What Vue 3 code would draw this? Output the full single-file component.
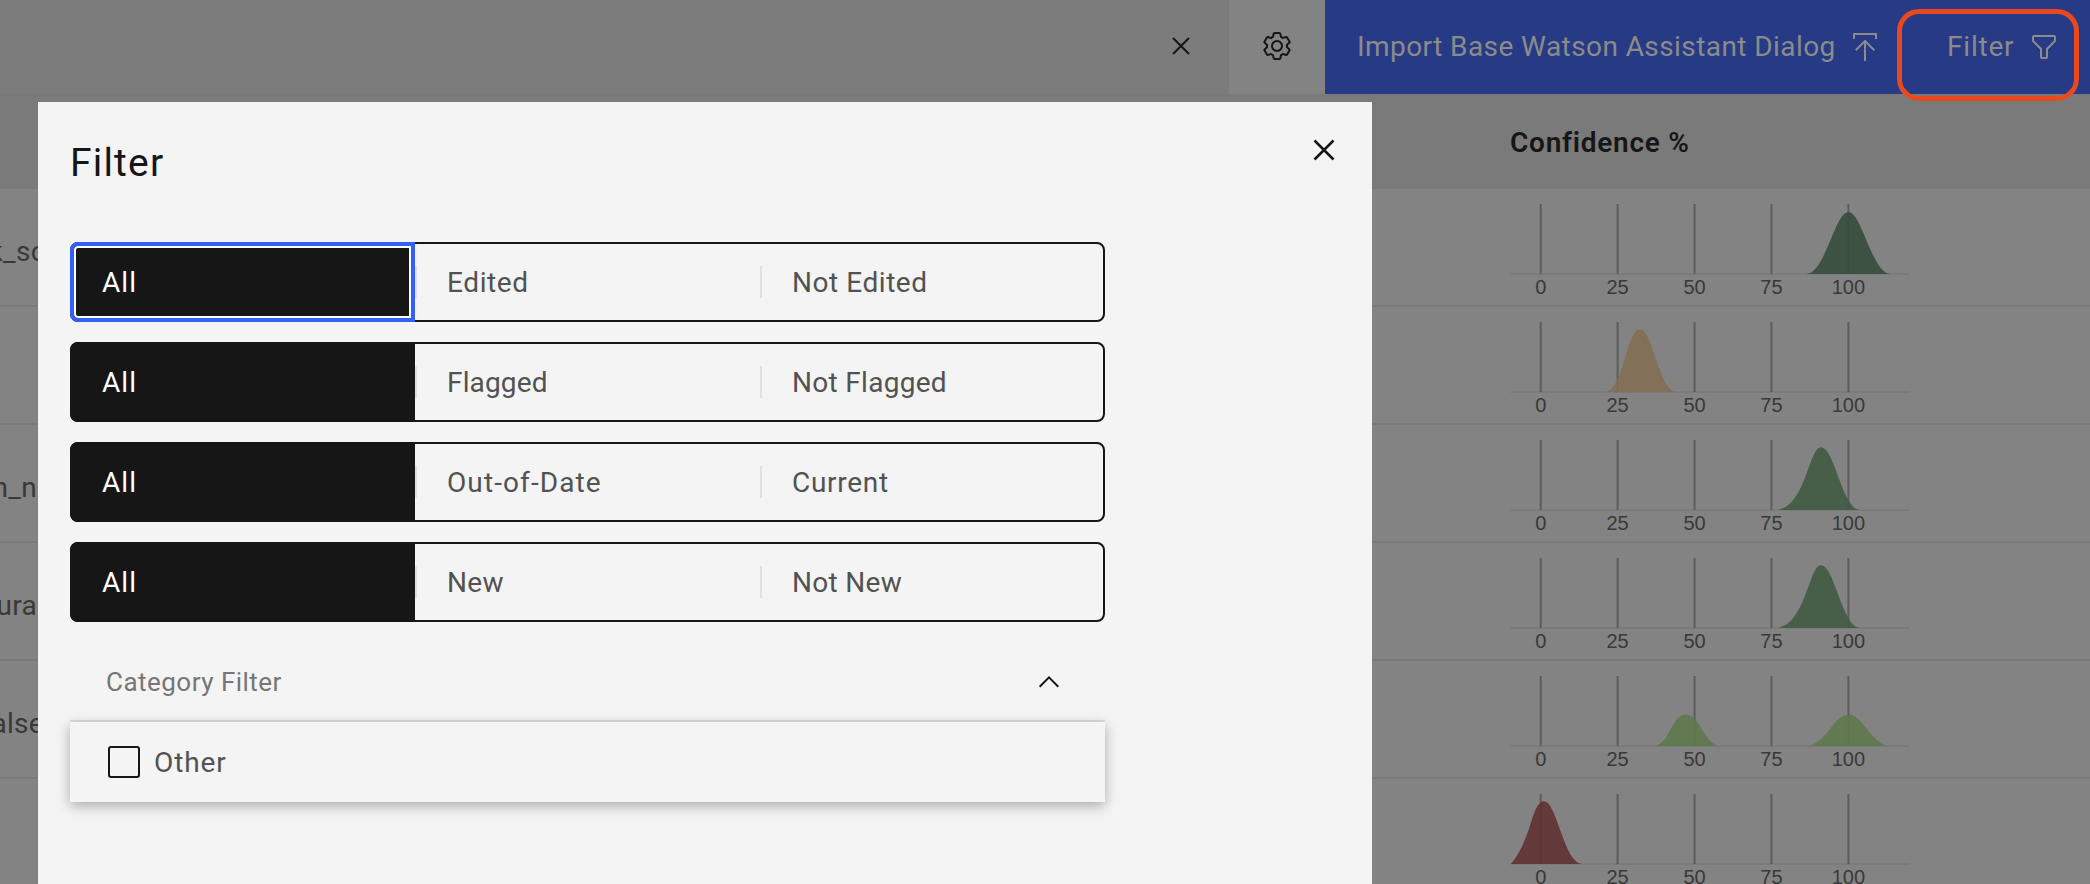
<script setup>
const filters = [
  [{ t: 'All', ls: 1.1 }, { t: 'Edited', ls: 0.6 }, { t: 'Not Edited', ls: 0.55 }],
  [{ t: 'All', ls: 1.1 }, { t: 'Flagged', ls: 0.15 }, { t: 'Not Flagged', ls: 0.3 }],
  [{ t: 'All', ls: 1.1 }, { t: 'Out-of-Date', ls: 1.1 }, { t: 'Current', ls: 0.7 }],
  [{ t: 'All', ls: 1.1 }, { t: 'New', ls: 0.4 }, { t: 'Not New', ls: 0.3 }],
]

const ticks = [0, 25, 50, 75, 100].map((v) => ({ v, x: 30.7 + v * 3.077 }))

const rows = [
  { label: 'k_so', end: 47, color: '#334a38', d: 'M296,85C315,85 325,23 338.4,23C352,23 362,85 380.7,85Z' },
  { label: '', end: 36, color: '#836e53', d: 'M95,85C113,85 117,22.3 129.7,22.3C143,22.3 149,85 166.7,85Z' },
  { label: 'n_n', end: 37, color: '#3e5a3f', d: 'M265,85C295,85 299,22.3 310.7,22.3C325,22.3 332,85 350.7,85Z' },
  { label: 'ura', end: 37, color: '#3e5a3f', d: 'M265,85C295,85 299,22.3 310.7,22.3C325,22.3 332,85 350.7,85Z' },
  {
    label: 'alse', end: 44, color: '#5d784b',
    d: 'M142.7,85C160,85 161,53.5 175.7,53.5C190,53.5 195,85 210.7,85Z M296,85C315,85 324,53.5 338.4,53.5C353,53.5 362,85 380.7,85Z',
  },
  { label: '', end: 36, color: '#5f2d2f', d: 'M0.7,85C8,77 14,64 19,50C23,37 27,22.3 34,22.3C47,22.3 54,85 72.7,85Z' },
]
</script>

<template>
  <div class="page">
    <header class="toolbar">
      <div class="search">
        <svg class="i32" viewBox="0 0 32 32"><path d="M8 8 24 24M24 8 8 24" fill="none" stroke="#161616" stroke-width="2" /></svg>
      </div>
      <div class="settings">
        <svg class="i32" viewBox="0 0 32 32" fill="#161616">
          <path d="M27,16.76c0-.25,0-.5,0-.76s0-.51,0-.77l1.92-1.68A2,2,0,0,0,29.3,11L26.94,7a2,2,0,0,0-1.73-1,2,2,0,0,0-.64.1l-2.43.82a11.35,11.35,0,0,0-1.31-.75l-.51-2.52a2,2,0,0,0-2-1.61H13.64a2,2,0,0,0-2,1.61l-.51,2.52a11.48,11.48,0,0,0-1.32.75L7.43,6.06A2,2,0,0,0,6.79,6,2,2,0,0,0,5.06,7L2.7,11a2,2,0,0,0,.41,2.51L5,15.24c0,.25,0,.5,0,.76s0,.51,0,.77L3.11,18.45A2,2,0,0,0,2.7,21L5.06,25a2,2,0,0,0,1.73,1,2,2,0,0,0,.64-.1l2.43-.82a11.35,11.35,0,0,0,1.31.75l.51,2.52a2,2,0,0,0,2,1.61h4.72a2,2,0,0,0,2-1.61l.51-2.52a11.48,11.48,0,0,0,1.32-.75l2.42.82a2,2,0,0,0,.64.1,2,2,0,0,0,1.73-1L29.3,21a2,2,0,0,0-.41-2.51ZM25.21,24l-3.43-1.16a8.86,8.86,0,0,1-2.71,1.57L18.36,28H13.64l-.71-3.55a9.36,9.36,0,0,1-2.7-1.57L6.79,24,4.43,20l2.72-2.4a8.9,8.9,0,0,1,0-3.13L4.43,12,6.79,8l3.43,1.16a8.86,8.86,0,0,1,2.71-1.57L13.64,4h4.72l.71,3.55a9.36,9.36,0,0,1,2.7,1.57L25.21,8,27.57,12l-2.72,2.4a8.9,8.9,0,0,1,0,3.13L27.57,20Z" />
          <path d="M16,22a6,6,0,1,1,6-6A5.94,5.94,0,0,1,16,22Zm0-10a3.91,3.91,0,0,0-4,4,3.91,3.91,0,0,0,4,4,3.91,3.91,0,0,0,4-4A3.91,3.91,0,0,0,16,12Z" />
        </svg>
      </div>
      <button class="btn import">
        <span class="import-label">Import Base Watson Assistant Dialog</span>
        <svg class="i32" viewBox="0 0 32 32"><path d="M5 8V3H27V8M16 30V10M6.7 19.3 16 10 25.3 19.3" fill="none" stroke="#8b8b8b" stroke-width="2" stroke-linejoin="round" /></svg>
      </button>
      <button class="btn filter">
        <span class="filter-label">Filter</span>
        <svg class="i32" viewBox="0 0 32 32" fill="#8b8b8b"><path d="M18,28H14a2,2,0,0,1-2-2V18.41L4.59,11A2,2,0,0,1,4,9.59V6A2,2,0,0,1,6,4H26a2,2,0,0,1,2,2V9.59A2,2,0,0,1,27.41,11L20,18.41V26A2,2,0,0,1,18,28ZM6,6V9.59l8,8V26h4V17.59l8-8V6Z" /></svg>
        <i class="highlight"></i>
      </button>
    </header>

    <div class="thead"><span>Confidence %</span></div>
    <div v-for="(r, i) in rows" :key="i" class="row">
      <div class="cell" :style="{ width: r.end + 'px' }"><span>{{ r.label }}</span></div>
      <svg class="chart" width="420" height="116" viewBox="0 0 420 116">
        <rect x="0.5" y="84.3" width="399" height="1.6" fill="#797979" />
        <rect v-for="t in ticks" :key="t.v" :x="t.x - 1" y="15" width="2" height="70" fill="#5c5c5c" />
        <path :d="r.d" :fill="r.color" fill-opacity="0.86" />
        <text v-for="t in ticks" :key="'l' + t.v" :x="t.x" y="105" text-anchor="middle">{{ t.v }}</text>
      </svg>
    </div>

    <section class="modal">
      <div class="modal-head">
        <h2>Filter</h2>
        <svg class="close" viewBox="0 0 32 32"><path d="M8.4 8.4 23.6 23.6M23.6 8.4 8.4 23.6" fill="none" stroke="#161616" stroke-width="2" /></svg>
      </div>
      <div class="switches">
        <div v-for="(f, i) in filters" :key="i" class="switcher">
          <div v-for="(o, j) in f" :key="j" class="opt" :class="{ on: j === 0, focus: i === 0 && j === 0 }">
            <span :style="{ letterSpacing: o.ls + 'px' }">{{ o.t }}</span>
          </div>
        </div>
      </div>
      <div class="dropdown">
        <span>Category Filter</span>
        <svg class="i32" viewBox="0 0 32 32"><path d="M6.7 20.7 16 11.4 25.3 20.7" fill="none" stroke="#161616" stroke-width="2" /></svg>
      </div>
      <div class="menu">
        <i class="box"></i>
        <span>Other</span>
      </div>
    </section>
  </div>
</template>

<style>
body { margin: 0; overflow: hidden; }
</style>

<style scoped>
* { box-sizing: border-box; }
.page {
  position: relative;
  width: 2090px;
  height: 884px;
  overflow: hidden;
  background: #838383;
  font-family: Roboto, "Liberation Sans", sans-serif;
  font-size: 28px;
  color: #393939;
}
svg { display: block; flex: none; }
.i32 { width: 32px; height: 32px; }
.toolbar { display: flex; height: 94px; }
.search { width: 1229px; background: #7c7c7c; display: flex; align-items: center; justify-content: flex-end; padding-right: 32px; padding-bottom: 2px; }
.settings { width: 96px; display: flex; align-items: center; justify-content: center; padding-bottom: 2px; }
.btn {
  border: 0;
  margin: 0;
  height: 94px;
  background: #273a85;
  color: #8b8b8b;
  font: 400 28px Roboto, sans-serif;
  display: flex;
  align-items: center;
  justify-content: space-between;
  padding-bottom: 2px;
  white-space: nowrap;
}
.import { width: 590px; padding-left: 32px; padding-right: 34px; }
.import-label { letter-spacing: 0.42px; }
.filter { width: 175px; position: relative; padding-left: 32px; padding-right: 30px; }
.filter-label { letter-spacing: 0.8px; }
.highlight { position: absolute; left: -18px; top: 9px; width: 182px; height: 92px; border: 5px solid #e9491f; border-radius: 22px; z-index: 1; }
.thead { height: 95px; background: #7a7a7a; padding-top: 2px; padding-left: 1510px; display: flex; align-items: center; font-weight: 600; color: #161616; }
.thead span { letter-spacing: 0.75px; white-space: nowrap; }
.row { height: 118px; border-bottom: 2px solid #7a7a7a; display: flex; justify-content: space-between; }
.cell { display: flex; justify-content: flex-end; align-items: center; padding-top: 9px; white-space: nowrap; }
.cell span { flex: none; letter-spacing: 0.3px; }
.chart { margin-right: 160px; }
.chart text { font: 20px "Liberation Sans", Arial, sans-serif; fill: #393939; }
.modal { position: absolute; left: 38px; top: 102px; width: 1334px; height: 782px; background: #f4f4f4; padding: 0 32px; }
.modal-head { height: 140px; display: flex; justify-content: space-between; align-items: flex-start; }
h2 { margin: 36px 0 0; font-weight: 400; font-size: 39px; line-height: 50px; letter-spacing: 1.2px; color: #161616; }
.close { width: 40px; height: 40px; margin: 28px -4px 0 0; }
.switches { display: flex; flex-direction: column; gap: 20px; width: 1035px; }
.switcher { height: 80px; display: flex; border: 2px solid #161616; border-radius: 8px; }
.opt { position: relative; width: 345px; padding-left: 32px; display: flex; align-items: center; color: #525252; white-space: nowrap; flex: none; }
.opt:last-child { width: 343px; }
.opt:not(.on)::before { content: ""; position: absolute; left: 0; top: 22px; width: 2px; height: 32px; background: #e0e0e0; }
.opt.on { margin: -2px 0 -2px -2px; background: #161616; color: #fff; border-radius: 8px 0 0 8px; }
.opt.focus { border: 4px solid #345ffb; box-shadow: inset 0 0 0 2px #fff; padding-left: 28px; }
.dropdown { width: 1035px; height: 100px; padding: 22px 40px 0 36px; border-bottom: 2px solid #dcdcdc; display: flex; align-items: center; justify-content: space-between; font-size: 26px; color: #767676; }
.dropdown span { letter-spacing: 0.48px; }
.menu { width: 1035px; height: 80px; padding-left: 38px; display: flex; align-items: center; gap: 14px; background: #f4f4f4; box-shadow: 0 4px 12px rgba(0, 0, 0, 0.3); color: #525252; }
.menu span { letter-spacing: 0.9px; }
.box { width: 32px; height: 32px; border: 2px solid #161616; border-radius: 3px; }
</style>
